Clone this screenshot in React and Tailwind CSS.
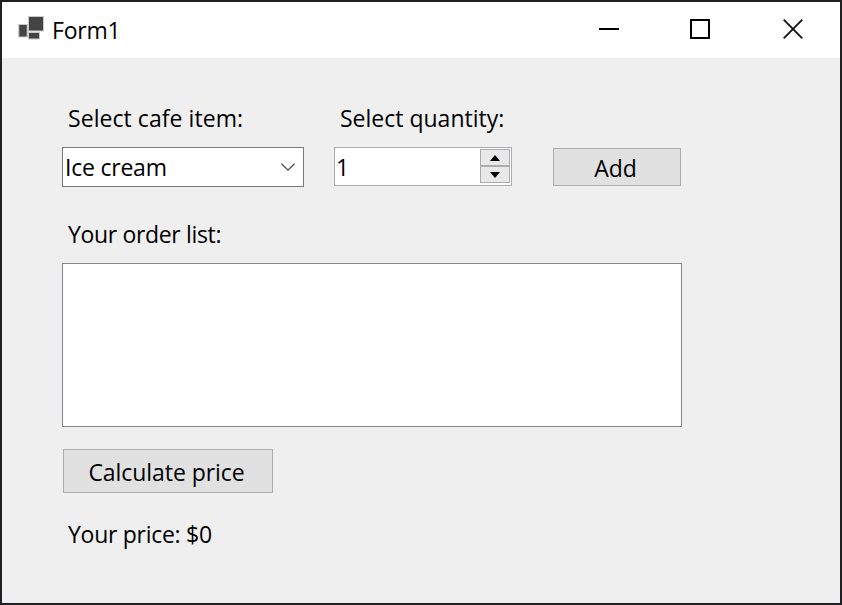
function Label({ children, className = "" }) {
  return <div className={`h-8 whitespace-nowrap pl-1.5 leading-[30px] ${className}`}>{children}</div>;
}

function TitleBar() {
  return (
    <header className="flex h-14 shrink-0 items-start bg-white">
      <svg className="ml-4 mt-3 shrink-0" width="28" height="28" viewBox="0 0 28 28">
        <g fill="#444" stroke="#c8c8c8" strokeWidth="1">
          <rect x="10.5" y="2.5" width="15" height="14.5" />
          <rect x="0.8" y="10.5" width="8.4" height="12.5" />
          <rect x="10.5" y="18.5" width="11" height="6.5" />
        </g>
      </svg>
      <span className="ml-1.5 mt-3 w-20 whitespace-nowrap leading-8 tracking-[-0.2px]">Form1</span>
      <div className="ml-auto mr-[37px] mt-4 flex">
        <svg width="20" height="22" viewBox="0 0 20 22">
          <path d="M0 11H20" stroke="#000" strokeWidth="2" />
        </svg>
        <svg width="20" height="22" viewBox="0 0 20 22" className="ml-[71px]">
          <rect x="1" y="2" width="18" height="18" fill="none" stroke="#000" strokeWidth="2" />
        </svg>
        <svg width="20" height="22" viewBox="0 0 20 22" className="ml-[73px]">
          <path d="M0.7 1.7L19.3 20.3M19.3 1.7L0.7 20.3" stroke="#111" strokeWidth="1.8" />
        </svg>
      </div>
    </header>
  );
}

function SpinButton({ d }) {
  return (
    <button className="flex h-[17px] w-[30px] items-center justify-center border border-[#acacac] bg-[#e8e8e8]">
      <svg width="10" height="6" viewBox="0 0 10 6">
        <path d={d} fill="#000" />
      </svg>
    </button>
  );
}

export default function App() {
  return (
    <div className="flex h-[605px] w-[842px] flex-col overflow-hidden border-2 border-[#202022] bg-[#efefef] font-['Open_Sans','Noto_Sans',sans-serif] text-[23px] text-black">
      <TitleBar />
      <main className="flex flex-col items-start pl-[60px] pt-[45px]">
        <div className="flex items-start">
          <div className="w-[272px]">
            <Label className="tracking-[0.06px]">Select cafe item:</Label>
            <div className="mt-3 flex h-10 w-[242px] items-center justify-between border border-[#7a7a7a] bg-white pl-[2px] pr-[8px]">
              <span className="whitespace-nowrap tracking-[-0.22px]">Ice cream</span>
              <svg width="14" height="8" viewBox="0 0 14 8">
                <path d="M0.5 0.7L7 7.1L13.5 0.7" fill="none" stroke="#444" strokeWidth="1.2" />
              </svg>
            </div>
          </div>
          <div className="w-[219px]">
            <Label>Select quantity:</Label>
            <div className="mt-3 flex h-[39px] w-[178px] items-start justify-between border border-[#abadb3] bg-white pl-px pr-px pt-px">
              <span className="leading-[36px]">1</span>
              <div className="flex flex-col">
                <SpinButton d="M5 0L10 6H0Z" />
                <SpinButton d="M0 0H10L5 6Z" />
              </div>
            </div>
          </div>
          <button className="mt-[45px] h-[38px] w-32 border border-[#adadad] bg-[#e1e1e1] pr-[3px] pt-0.5 leading-8">Add</button>
        </div>
        <Label className="mt-8 tracking-[-0.34px]">Your order list:</Label>
        <div className="mt-[12px] h-[164px] w-[620px] border border-[#828790] bg-white" />
        <button className="ml-px mt-[22px] h-11 w-[210px] whitespace-nowrap border border-[#adadad] bg-[#e1e1e1] pr-[3px] pt-0.5 leading-8 tracking-[-0.06px]">Calculate price</button>
        <Label className="mt-[26px] tracking-[-0.28px]">Your price: $0</Label>
      </main>
    </div>
  );
}
